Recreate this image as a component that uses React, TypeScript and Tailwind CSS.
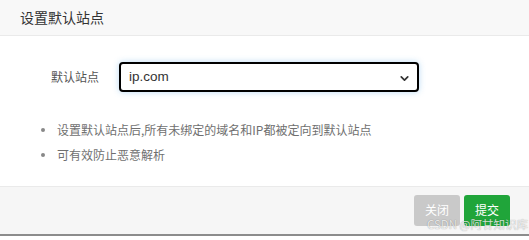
import { ChevronDown } from "lucide-react";

const tips = [
  "设置默认站点后,所有未绑定的域名和IP都被定向到默认站点",
  "可有效防止恶意解析",
];

export default function App() {
  return (
    <div className="relative w-[529px] h-[236px] overflow-hidden bg-white flex flex-col font-['Microsoft_YaHei','Noto_Sans_CJK_SC',sans-serif]">
      {/* header */}
      <div className="h-[36px] shrink-0 bg-[#f8f8f8] border-b border-[#eaeaea] pl-[20px] text-[14px] leading-[35px] text-[#333]">
        设置默认站点
      </div>

      {/* body */}
      <div className="flex-1">
        <div className="flex items-center mt-[26px]">
          <label className="w-[100px] pr-[1px] text-right text-[12px] text-[#555]">默认站点</label>
          <div className="ml-[19px] relative w-[300px] h-[30px] rounded-[4px] border-2 border-black bg-white shadow-[0_0_6px_rgba(102,175,233,0.45)] flex items-center">
            <span className="pl-[8px] text-[13.5px] text-[#333] font-['Liberation_Sans','Noto_Sans_CJK_SC',sans-serif]">ip.com</span>
            <ChevronDown size={13} strokeWidth={3.2} className="absolute right-[6px] top-[8px] text-[#333]" />
          </div>
        </div>

        <ul className="mt-[25px] pl-[41px]">
          {tips.map((t) => (
            <li key={t} className="flex items-center h-[25px] text-[12px] text-[#6f6f6f]">
              <span className="w-[4px] h-[4px] rounded-full bg-[#888] mr-[12px]" />
              {t}
            </li>
          ))}
        </ul>
      </div>

      {/* footer */}
      <div className="h-[50px] shrink-0 bg-[#f6f6f6] border-t border-[#eaeaea] border-b-2 border-b-[#8c8c8c] flex justify-end items-start pt-[8px] pr-[19px] gap-[4px]">
        <button className="w-[46px] h-[31px] rounded-[3px] bg-[#c9c9c9] text-white text-[12px] leading-[12px] pb-[1px]">关闭</button>
        <button className="w-[46px] h-[31px] rounded-[3px] bg-[#20a53a] text-white text-[12px] leading-[12px] pb-[1px]">提交</button>
      </div>

      {/* watermark */}
      <span className="absolute right-[1px] top-[218px] text-[11.5px] leading-[12px] text-white/80 [text-shadow:0_0_1px_rgba(0,0,0,0.45)] pointer-events-none">
        CSDN @阿甘知识库
      </span>
    </div>
  );
}
